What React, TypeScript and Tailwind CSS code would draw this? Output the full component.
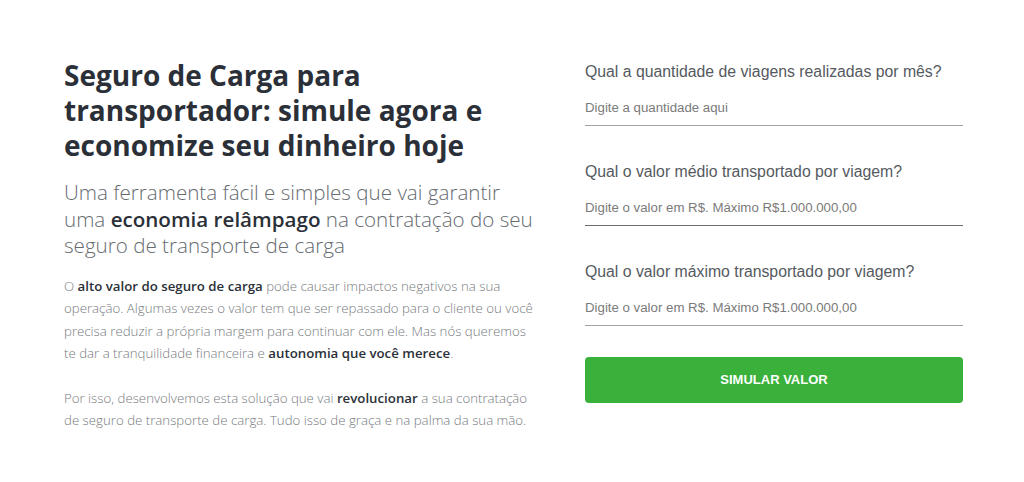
const fields = [
  {
    label: 'Qual a quantidade de viagens realizadas por mês?',
    placeholder: 'Digite a quantidade aqui',
    line: 'border-[#a3a3a3]',
  },
  {
    label: 'Qual o valor médio transportado por viagem?',
    placeholder: 'Digite o valor em R$. Máximo R$1.000.000,00',
    line: 'border-[#6e6e6e]',
  },
  {
    label: 'Qual o valor máximo transportado por viagem?',
    placeholder: 'Digite o valor em R$. Máximo R$1.000.000,00',
    line: 'border-[#a3a3a3]',
  },
];

export default function App() {
  return (
    <div className="min-h-[482px] w-full bg-white">
      <div className="flex gap-[45px] pl-[64px]">
        <div className="w-[476px] pt-[58px] font-['Open_Sans',sans-serif]">
          <h1 className="text-[28px] font-bold leading-[35px] text-[#2b3038]">
            Seguro de Carga para transportador: simule agora e economize seu
            dinheiro hoje
          </h1>
          <p className="mt-[16px] text-[20.6px] font-light leading-[26.5px] text-[#666b70]">
            Uma ferramenta fácil e simples que vai garantir uma{' '}
            <strong className="font-semibold text-[#2b3038]">
              economia relâmpago
            </strong>{' '}
            na contratação do seu seguro de transporte de carga
          </p>
          <p className="mt-[16px] text-[13.25px] font-light leading-[22.5px] text-[#777b80]">
            O{' '}
            <strong className="font-semibold text-[#2b3038]">
              alto valor do seguro de carga
            </strong>{' '}
            pode causar impactos negativos na sua operação. Algumas vezes o
            valor tem que ser repassado para o cliente ou você precisa reduzir a
            própria margem para continuar com ele. Mas nós queremos te dar a
            tranquilidade financeira e{' '}
            <strong className="font-semibold text-[#2b3038]">
              autonomia que você merece
            </strong>
            .
          </p>
          <p className="mt-[22px] text-[13.25px] font-light leading-[22.5px] text-[#777b80]">
            Por isso, desenvolvemos esta solução que vai{' '}
            <strong className="font-semibold text-[#2b3038]">
              revolucionar
            </strong>{' '}
            a sua contratação de seguro de transporte de carga. Tudo isso de
            graça e na palma da sua mão.
          </p>
        </div>
        <form className="w-[378px] pt-[63px] font-['Liberation_Sans',Arial,sans-serif]">
          {fields.map((f) => (
            <div key={f.label} className="mb-[37px] flex flex-col">
              <label className="text-[15.8px] leading-[18px] text-[#555a60]">
                {f.label}
              </label>
              <input
                placeholder={f.placeholder}
                className={`h-[45px] border-b-[1.5px] ${f.line} bg-transparent pt-[8px] text-[13.25px] text-[#555] outline-none placeholder:text-[#7a7a7a]`}
              />
            </div>
          ))}
          <button
            type="button"
            className="-mt-[6px] h-[46px] w-full rounded-[4px] bg-[#39b13a] text-[13px] font-bold text-white"
          >
            SIMULAR VALOR
          </button>
        </form>
      </div>
    </div>
  );
}
